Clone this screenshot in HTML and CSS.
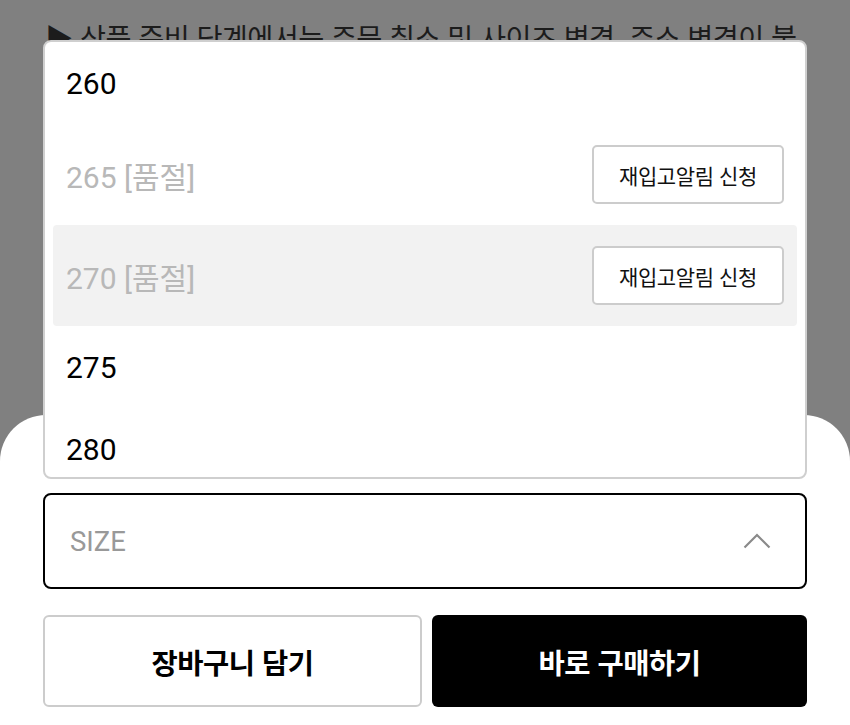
FILE: index.html
```html
<!DOCTYPE html>
<html lang="ko">
<head>
<meta charset="utf-8">
<title>Size select</title>
<link rel="stylesheet" href="styles.css">
</head>
<body>
<div class="page">
  <p class="notice">▶ 상품 준비 단계에서는 주문 취소 및 사이즈 변경, 주소 변경이 불가합니다.</p>
</div>
<div class="sheet">
  <div class="select-wrap">
    <div class="options">
      <div class="opt">260</div>
      <div class="opt soldout"><span>265 [품절]</span><button class="restock">재입고알림 신청</button></div>
      <div class="opt soldout active"><span>270 [품절]</span><button class="restock">재입고알림 신청</button></div>
      <div class="opt">275</div>
      <div class="opt">280</div>
      <div class="opt">285</div>
    </div>
    <div class="select">
      <span>SIZE</span>
      <svg class="chev" width="28" height="16" viewBox="0 0 28 16"><path d="M1.5 14.5 L14 2 L26.5 14.5" fill="none" stroke="#8a8a8a" stroke-width="2.2"/></svg>
    </div>
  </div>
  <div class="actions">
    <button class="btn btn-cart">장바구니 담기</button>
    <button class="btn btn-buy">바로 구매하기</button>
  </div>
</div>
</body>
</html>
```
FILE: styles.css
```css
html, body {
  margin: 0;
  padding: 0;
}
body {
  width: 850px;
  height: 725px;
  background: #808080;
  overflow: hidden;
  position: relative;
  font-family: Roboto, "Noto Sans CJK KR", sans-serif;
}
.page {
  padding: 16px 45px 0;
}
.notice {
  margin: 0;
  font-family: "Noto Sans CJK KR", sans-serif;
  font-size: 28.3px;
  line-height: 42px;
  letter-spacing: -0.6px;
  color: #1c1c1c;
}
.sheet {
  position: absolute;
  left: 0;
  right: 0;
  bottom: 0;
  height: 310px;
  background: #fff;
  border-radius: 46px 46px 0 0;
  padding: 78px 43px 0;
  box-sizing: border-box;
}
.select-wrap {
  position: relative;
}
.options {
  position: absolute;
  left: 0;
  right: 0;
  bottom: calc(100% + 14px);
  height: 439px;
  box-sizing: border-box;
  border: 2px solid #cfcfcf;
  border-radius: 8px;
  background: #fff;
  overflow: hidden;
  padding: 0 8px;
}
.opt {
  display: flex;
  align-items: center;
  justify-content: space-between;
  height: 82px;
  padding: 0 13px;
  font-size: 30px;
  color: #000;
  border-radius: 4px;
}
.opt.soldout {
  height: 101px;
  color: #b8b8b8;
}
.opt.active {
  background: #f2f2f2;
}
.restock {
  width: 192px;
  height: 59px;
  box-sizing: border-box;
  border: 2px solid #cccccc;
  border-radius: 5px;
  background: #fff;
  font-family: "Noto Sans CJK KR", sans-serif;
  font-size: 21px;
  letter-spacing: -0.4px;
  color: #111;
  padding: 0;
}
.select {
  display: flex;
  align-items: center;
  justify-content: space-between;
  height: 96px;
  box-sizing: border-box;
  border: 2px solid #000;
  border-radius: 8px;
  padding: 0 34px 0 25px;
  font-size: 27.5px;
  color: #999;
}
.chev {
  display: block;
}
.actions {
  display: flex;
  gap: 10px;
  margin-top: 26px;
}
.btn {
  height: 92px;
  box-sizing: border-box;
  border-radius: 6px;
  font-family: "Noto Sans CJK KR", sans-serif;
  font-size: 28.5px;
  font-weight: 700;
  letter-spacing: -0.5px;
  padding: 0;
}
.btn-cart {
  flex: 0 0 379px;
  border: 2px solid #cccccc;
  background: #fff;
  color: #000;
}
.btn-buy {
  flex: 1;
  border: none;
  background: #000;
  color: #fff;
}
```
